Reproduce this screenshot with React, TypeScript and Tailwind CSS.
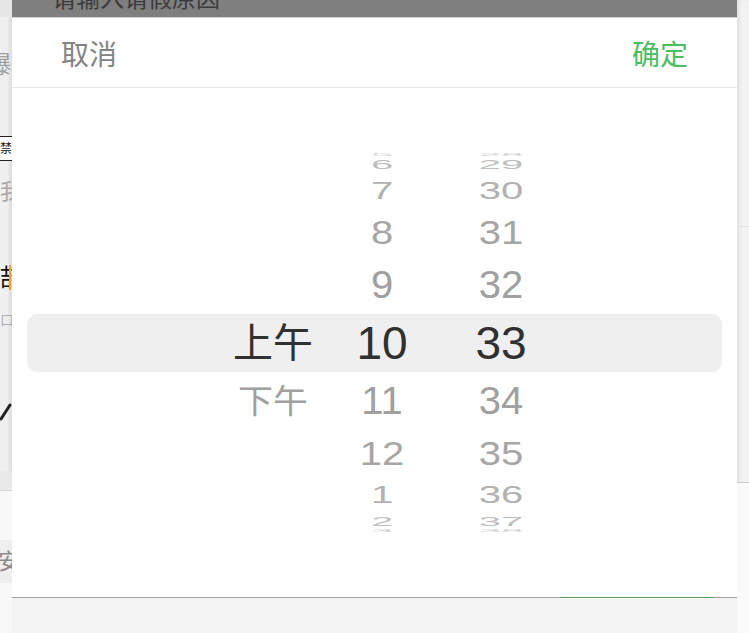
import React from "react";

const R = 188;
const STEP = 18;

type Col = { items: string[]; selected: number; cjk?: boolean; width: string };

function WheelItem({ label, i, cjk }: { label: string; i: number; cjk?: boolean }) {
  const abs = Math.min(Math.abs(i) * STEP, 86);
  const deg = abs * Math.sign(i);
  const rad = (deg * Math.PI) / 180;
  const y = R * Math.sin(rad);
  const s = Math.cos(rad);
  const fades = [1, 1, 0.93, 0.82, 0.68, 0.5];
  const opacity = fades[Math.min(Math.abs(i), 5)];
  const sel = i === 0;
  const size = cjk
    ? sel
      ? "text-[40px]"
      : "text-[35px]"
    : sel
      ? "text-[46px]"
      : "text-[40px]";
  const color = sel ? "text-[#303030]" : "text-[#a0a0a0]";
  return (
    <div
      className={`absolute left-0 right-0 top-1/2 -mt-[29px] flex h-[58px] items-center justify-center leading-none whitespace-nowrap ${size} ${color}`}
      style={{ transform: `translateY(${y}px) scaleY(${s})`, opacity }}
    >
      {label}
    </div>
  );
}

function WheelColumn({ col }: { col: Col }) {
  return (
    <div className={`relative h-[380px] ${col.width}`}>
      {col.items.map((label, idx) => {
        const i = idx - col.selected;
        if (Math.abs(i) > 5) return null;
        return <WheelItem key={label + idx} label={label} i={i} cjk={col.cjk} />;
      })}
    </div>
  );
}

export default function App() {
  const ampm: Col = { items: ["上午", "下午"], selected: 0, cjk: true, width: "w-[100px]" };
  const hours: Col = {
    items: ["5", "6", "7", "8", "9", "10", "11", "12", "1", "2", "3"],
    selected: 5,
    width: "w-[118px]",
  };
  const minutes: Col = {
    items: ["28", "29", "30", "31", "32", "33", "34", "35", "36", "37", "38"],
    selected: 5,
    width: "w-[120px]",
  };

  return (
    <div className="flex h-[633px] w-[749px] overflow-hidden bg-[#f0f0f0] font-['Liberation_Sans','Noto_Sans_CJK_SC',sans-serif]">
      {/* left page fragment */}
      <div className="flex w-[12px] shrink-0 flex-col overflow-hidden bg-[#efefef] shadow-[inset_-3px_0_3px_rgba(0,0,0,0.07)]">
        <div className="h-[17px] shrink-0 bg-[#e6e6e6]" />
        <div className="h-[36px] shrink-0" />
        <div className="flex h-[24px] shrink-0 items-center">
          <span className="-ml-[13px] text-[24px] leading-none text-[#a0a0a0]">爆</span>
        </div>
        <div className="h-[59px] shrink-0" />
        <div className="flex h-[25px] shrink-0 items-center border-y border-[#222] bg-white">
          <span className="text-[12px] leading-none text-[#111]">禁</span>
        </div>
        <div className="h-[20px] shrink-0" />
        <div className="flex h-[22px] shrink-0 items-center">
          <span className="text-[22px] leading-none text-[#a8a8a8]">我</span>
        </div>
        <div className="h-[62px] shrink-0" />
        <div className="relative flex h-[25px] shrink-0 items-center">
          <span className="text-[24px] leading-none text-[#111]">喆</span>
          <span className="absolute right-[1px] top-0 h-[25px] w-[2px] bg-[#f0a030]" />
        </div>
        <div className="h-[22px] shrink-0" />
        <div className="flex h-[15px] shrink-0 items-center">
          <span className="text-[14px] leading-none text-[#b0b0b0]">口</span>
        </div>
        <div className="h-[72px] shrink-0" />
        <div className="h-[22px] shrink-0">
          <svg width="12" height="22" viewBox="0 0 12 22">
            <path d="M1 20 L10 6" stroke="#222" strokeWidth="3" strokeLinecap="round" />
          </svg>
        </div>
        <div className="h-[50px] shrink-0" />
        <div className="h-[19px] shrink-0 bg-[#e9e9e9]" />
        <div className="h-[50px] shrink-0 border-t border-[#d6d6d6] bg-[#f8f8f8]" />
        <div className="flex h-[43px] shrink-0 items-center bg-[#eeeeee]">
          <span className="-ml-[2px] text-[22px] leading-none text-[#8a8a8a]">安</span>
        </div>
        <div className="flex-1 bg-[#f8f8f8]" />
      </div>

      {/* main window */}
      <div className="flex w-[725px] shrink-0 flex-col">
        <div className="h-[17px] shrink-0 overflow-hidden bg-[#7f7f7f] pl-[40px]">
          <div className="-mt-[13px] text-[24px] leading-[24px] text-[#3c3c3c]">请输入请假原因</div>
        </div>
        <div className="h-[1px] shrink-0 bg-[#d4d4d4]" />
        <div className="flex h-[579px] shrink-0 flex-col bg-white">
          <div className="flex h-[70px] shrink-0 items-center justify-between border-b border-[#e6e6e6] px-[49px] pt-[6px] text-[28px] leading-none">
            <span className="text-[#838383]">取消</span>
            <span className="text-[#4cbd62]">确定</span>
          </div>
          <div className="relative flex flex-1 items-center">
            <div className="absolute left-[15px] right-[15px] top-1/2 -mt-[29px] h-[58px] rounded-[10px] bg-[#efefef]" />
            <div className="relative ml-[211px] flex">
              <WheelColumn col={ampm} />
              <WheelColumn col={hours} />
              <WheelColumn col={minutes} />
            </div>
          </div>
        </div>
        <div className="flex h-[1px] shrink-0">
          <div className="w-[548px] bg-[#a3a3a3]" />
          <div className="w-[154px] bg-[#5f9f62]" />
          <div className="flex-1 bg-[#a3a3a3]" />
        </div>
        <div className="flex-1 bg-[#f3f3f3]" />
      </div>

      {/* right page fragment */}
      <div className="flex flex-1 flex-col bg-[#f2f2f2] shadow-[inset_3px_0_3px_rgba(0,0,0,0.06)]">
        <div className="h-[227px] shrink-0 border-b border-[#e2e2e2]" />
        <div className="h-[255px] shrink-0" />
        <div className="flex-1 border-t border-[#c9c9c9] bg-[#fafafa]" />
      </div>
    </div>
  );
}
